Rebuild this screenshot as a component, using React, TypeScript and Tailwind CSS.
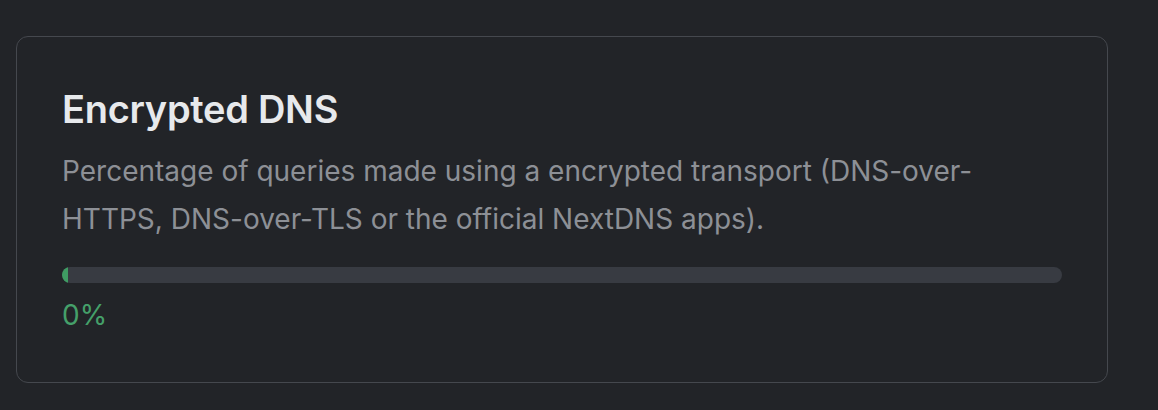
import React from "react";

const percent = 0;

export default function App() {
  return (
    <div
      className="min-h-[410px] w-full bg-[#222428] pt-[36px] pl-[16px]"
      style={{ fontFamily: "Inter, 'Noto Sans', sans-serif" }}
    >
      <div className="w-[1092px] h-[347px] rounded-[12px] border border-[#45484e] bg-[#222428] px-[45px] pt-[48px]">
        <h2 className="text-[38px] leading-[48px] font-semibold tracking-[-0.3px] text-[#e7e9ec]">
          Encrypted DNS
        </h2>
        <p className="mt-[14px] w-[960px] text-[28px] leading-[48px] text-[#8d9096]">
          Percentage of queries made using a encrypted transport (DNS-over-HTTPS, DNS-over-TLS or
          the official NextDNS apps).
        </p>
        <div className="mt-[24px] h-[16px] w-full overflow-hidden rounded-full bg-[#383b42]">
          <div
            className="h-full min-w-[6px] rounded-l-full bg-[#3f9c63]"
            style={{ width: `${percent}%` }}
          />
        </div>
        <div className="mt-[12px] text-[28px] leading-[40px] text-[#45a06a]">{percent}%</div>
      </div>
    </div>
  );
}
